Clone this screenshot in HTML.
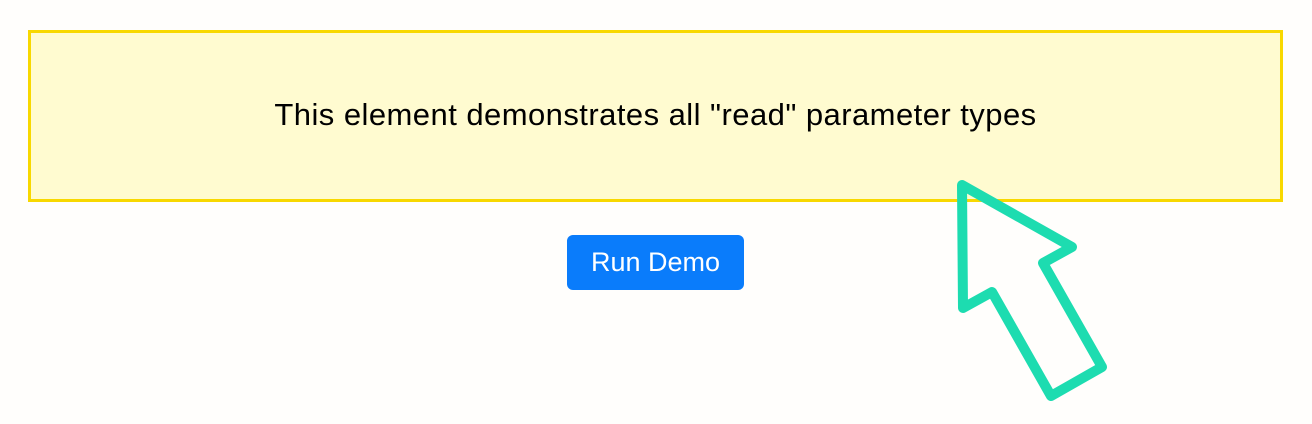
<!DOCTYPE html>
<html><head><style>
html,body{margin:0;padding:0;width:1312px;height:424px;background:#fffefc;overflow:hidden;font-family:"Liberation Sans",Arial,sans-serif}
.box{position:absolute;left:28px;top:30px;width:1249px;height:166px;border:3px solid #f8d800;background:#fffbd0;display:flex;align-items:center;justify-content:center;font-size:31px;letter-spacing:0.45px;color:#000}
.btn{position:absolute;left:567px;top:235px;width:177px;height:55px;background:#0a7cfb;border-radius:6px;color:#fff;font-size:27px;display:flex;align-items:center;justify-content:center}
svg{position:absolute;left:0;top:0}
</style></head><body>
<div class="box"><span style="margin-top:-2px">This element demonstrates all "read" parameter types</span></div>
<div class="btn"><span style="margin-top:-1px">Run Demo</span></div>
<svg width="1312" height="424"><path d="M962 185 L1072 247 L1043 263 L1102 367 L1051 396 L992 292 L963 308 Z" fill="none" stroke="#1ddcb0" stroke-width="10" stroke-linejoin="round"/></svg>
</body></html>
